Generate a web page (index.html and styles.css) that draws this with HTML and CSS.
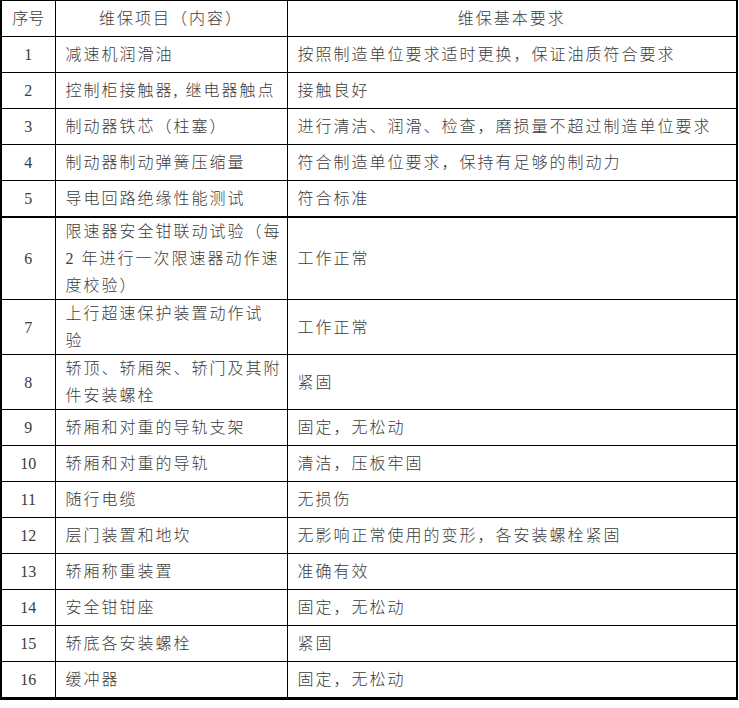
FILE: index.html
```html
<!DOCTYPE html>
<html lang="zh-CN">
<head>
<meta charset="utf-8">
<title>维保项目</title>
<link rel="stylesheet" href="styles.css">
</head>
<body>
<table class="maint">
  <colgroup>
    <col class="c-no">
    <col class="c-item">
    <col class="c-req">
  </colgroup>
  <thead>
    <tr class="row">
      <th class="no">序号</th>
      <th class="head">维保项目（内容）</th>
      <th class="head">维保基本要求</th>
    </tr>
  </thead>
  <tbody>
    <tr class="row"><td class="no">1</td><td>减速机润滑油</td><td>按照制造单位要求适时更换，保证油质符合要求</td></tr>
    <tr class="row"><td class="no">2</td><td>控制柜接触器, 继电器触点</td><td>接触良好</td></tr>
    <tr class="row"><td class="no">3</td><td>制动器铁芯（柱塞）</td><td>进行清洁、润滑、检查，磨损量不超过制造单位要求</td></tr>
    <tr class="row"><td class="no">4</td><td>制动器制动弹簧压缩量</td><td>符合制造单位要求，保持有足够的制动力</td></tr>
    <tr class="row sep"><td class="no">5</td><td>导电回路绝缘性能测试</td><td>符合标准</td></tr>
    <tr><td class="no">6</td><td>限速器安全钳联动试验（每<br>2 年进行一次限速器动作速<br>度校验）</td><td>工作正常</td></tr>
    <tr><td class="no">7</td><td>上行超速保护装置动作试<br>验</td><td>工作正常</td></tr>
    <tr><td class="no">8</td><td>轿顶、轿厢架、轿门及其附<br>件安装螺栓</td><td>紧固</td></tr>
    <tr class="row"><td class="no">9</td><td>轿厢和对重的导轨支架</td><td>固定，无松动</td></tr>
    <tr class="row"><td class="no">10</td><td>轿厢和对重的导轨</td><td>清洁，压板牢固</td></tr>
    <tr class="row"><td class="no">11</td><td>随行电缆</td><td>无损伤</td></tr>
    <tr class="row"><td class="no">12</td><td>层门装置和地坎</td><td>无影响正常使用的变形，各安装螺栓紧固</td></tr>
    <tr class="row"><td class="no">13</td><td>轿厢称重装置</td><td>准确有效</td></tr>
    <tr class="row"><td class="no">14</td><td>安全钳钳座</td><td>固定，无松动</td></tr>
    <tr class="row"><td class="no">15</td><td>轿底各安装螺栓</td><td>紧固</td></tr>
    <tr class="row last"><td class="no">16</td><td>缓冲器</td><td>固定，无松动</td></tr>
  </tbody>
</table>
</body>
</html>
```

FILE: styles.css
```css
html, body {
  margin: 0;
  padding: 0;
  background: #ffffff;
}

.maint {
  border-collapse: collapse;
  table-layout: fixed;
  width: 738px;
  font-family: "Liberation Serif", "Noto Sans CJK SC", serif;
  font-size: 16px;
  font-weight: 300;
  letter-spacing: 2px;
  color: #3c3c3c;
  line-height: 27px;
  border-left: 2px solid #000;
  border-right: 2px solid #000;
  border-top: 1px solid #000;
  border-bottom: 3px solid #000;
}

.c-no { width: 54px; }
.c-item { width: 232px; }
.c-req { width: 450px; }

.maint th,
.maint td {
  border: 1px solid #000;
  padding: 0 2px 0 10px;
  vertical-align: middle;
  text-align: left;
  font-weight: 300;
  white-space: nowrap;
}

.maint .row > th,
.maint .row > td {
  height: 35px;
}

.maint .head {
  text-align: center;
  padding: 0;
}

.maint .no {
  text-align: center;
  padding: 0;
  letter-spacing: 0;
}

.maint .sep > td {
  border-bottom: 2px solid #000;
}

.maint .last > td {
  border-bottom: 3px solid #000;
}
```
